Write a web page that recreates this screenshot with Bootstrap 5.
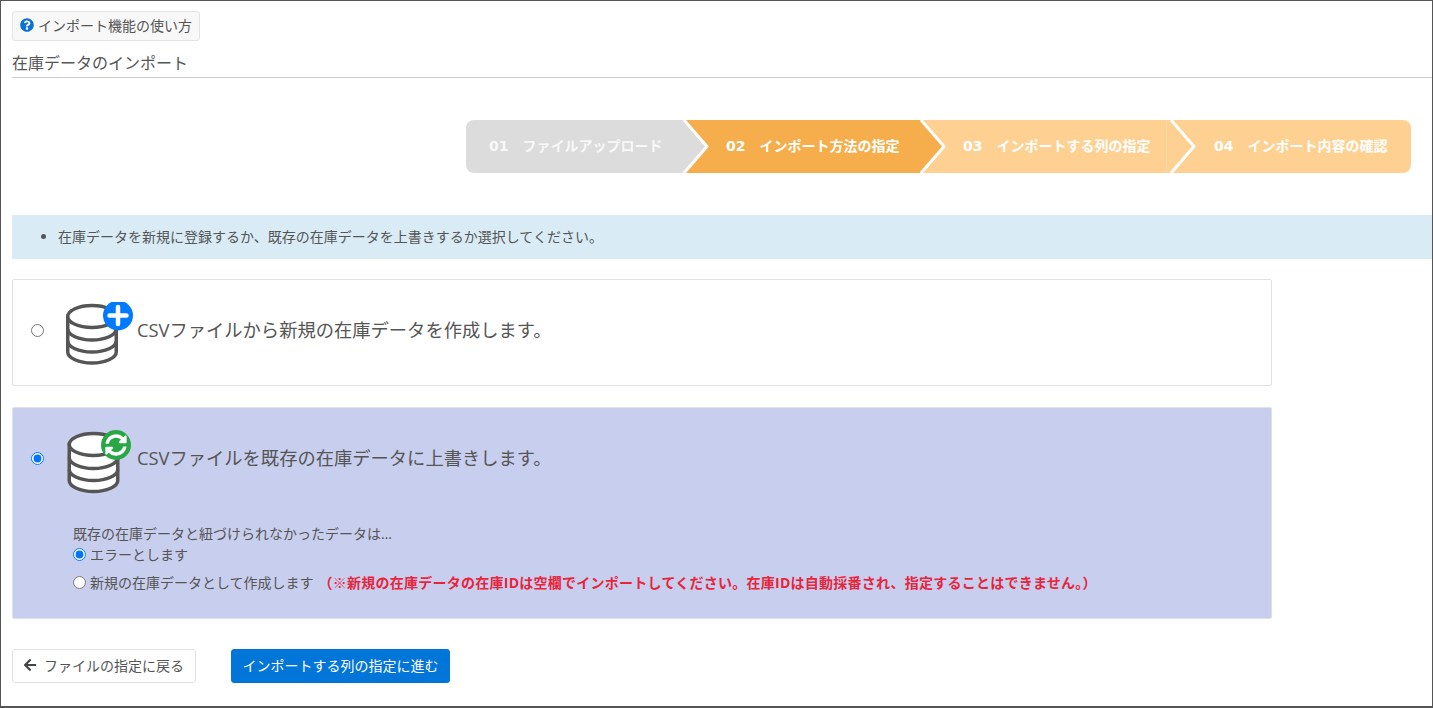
<!DOCTYPE html>
<html lang="ja">
<head>
    <meta charset="UTF-8">
    <meta name="viewport" content="width=device-width, initial-scale=1">
    <title>在庫データのインポート</title>
    <link href="https://cdn.jsdelivr.net/npm/bootstrap@5.3.0/dist/css/bootstrap.min.css" rel="stylesheet">
    <script src="https://cdn.jsdelivr.net/npm/bootstrap@5.3.0/dist/js/bootstrap.bundle.min.js"></script>
    <style>
        html, body { height: 100%; overflow: hidden; }
        body { font-family: "Open Sans", "Noto Sans CJK JP", sans-serif; font-size: 14px; color: #555; background: #fff; }
        .page-frame { height: 708px; border: 1px solid #555; border-bottom-width: 2px; padding: 10px 0 0 11px; }
        .help-btn { display: inline-flex; align-items: center; gap: 4px; height: 30px; padding: 0 7px 2px; font-size: 14px; color: #555; background: #f8f8f9; border: 1px solid #e2e3e7; border-radius: 3px; }
        .page-title { margin: 12px 0 0; height: 25px; font-size: 16px; line-height: 21px; font-weight: 400; border-bottom: 1px solid #ccc; color: #555; }
        .stepper { width: 945px; height: 53px; margin: 42px 0 42px 454px; font-family: "DejaVu Sans", "Noto Sans CJK JP", sans-serif; font-size: 14px; font-weight: 700; color: #fff; }
        .step-item { position: relative; display: flex; align-items: center; height: 53px; }
        .step-item svg { position: absolute; top: 0; left: 100%; z-index: 1; overflow: visible; }
        .step-no { margin-right: 14px; }
        .step-1 { width: 218px; padding-left: 23px; background: #dcdcdc; border-radius: 8px 0 0 8px; color: #f8f8f8; }
        .step-2 { width: 237px; padding-left: 42px; background: #f6ad4b; }
        .step-3 { width: 246px; padding-left: 42px; background: #fed193; border-right: 1px solid #fbd7a6; }
        .step-4 { width: 244px; padding-left: 47px; background: #fed193; border-radius: 0 8px 8px 0; }
        .step-3 svg { left: calc(100% + 5px); }
        .info-bar { height: 44px; background: #d9ecf5; margin: 0 0 20px; padding: 0 0 2px 46px; display: flex; align-items: center; }
        .info-bar ul { margin: 0; padding: 0; }
        .option-box { width: 1260px; border: 1px solid #dee2e6; border-radius: 2px; padding: 22px 0 0 18px; margin-bottom: 21px; }
        .option-new { height: 107px; }
        .option-over { height: 212px; background: #c8ceed; }
        .option-head { display: flex; }
        .option-head input { margin: 22px 0 0; width: 13px; height: 13px; }
        .option-head svg { margin-left: 20px; flex: none; }
        .option-over .option-head svg { margin-left: 21px; }
        .option-label { margin: 13px 0 0 3px; font-size: 18.3px; line-height: 30px; }
        .option-over .option-label { margin-left: 2px; }
        .sub-options { margin: 28px 0 0 42px; line-height: 20px; }
        .sub-row { display: flex; align-items: center; gap: 4px; margin: 0; height: 20px; }
        .sub-row input { margin: 0; width: 13px; height: 13px; }
        .sub-row + .sub-row { margin-top: 8px; }
        .sub-rows { padding-top: 0.5px; }
        .dots { letter-spacing: 1px; }
        .warn-text { color: #e8243c; font-weight: 700; margin-left: 1px; letter-spacing: .25px; }
        .foot-btns { display: flex; gap: 35px; margin-top: 30px; }
        .back-btn { display: inline-flex; align-items: center; gap: 7px; height: 34px; padding: 0 11px 2px 10px; font-size: 14px; color: #555; background: #fff; border: 1px solid #dee2e6; border-radius: 3px; }
        .next-btn { height: 34px; padding: 0 10.5px 2px; font-size: 14px; color: #fff; background: #0275d8; border: 1px solid #0275d8; border-radius: 3px; }
    </style>
</head>
<body>
    <div class="page-frame">
        <button type="button" class="help-btn">
            <svg width="14" height="14" viewBox="0 0 512 512"><path fill="#0b72d1" d="M504 256c0 136.997-111.043 248-248 248S8 392.997 8 256C8 119.083 119.043 8 256 8s248 111.083 248 248zM262.655 90c-54.497 0-89.255 22.957-116.549 63.758-3.536 5.286-2.353 12.415 2.715 16.258l34.699 26.31c5.205 3.947 12.621 3.008 16.665-2.122 17.864-22.658 30.113-35.797 57.303-35.797 20.429 0 45.698 13.148 45.698 32.958 0 14.976-12.363 22.667-32.534 33.976C247.128 238.528 216 254.941 216 296v4c0 6.627 5.373 12 12 12h56c6.627 0 12-5.373 12-12v-1.333c0-28.462 83.186-29.647 83.186-106.667 0-58.002-60.165-102-116.531-102zM256 338c-25.365 0-46 20.635-46 46 0 25.364 20.635 46 46 46s46-20.636 46-46c0-25.365-20.635-46-46-46z"/></svg>
            インポート機能の使い方
        </button>
        <h1 class="page-title">在庫データのインポート</h1>

        <!-- Steps -->
        <div class="stepper d-flex">
            <div class="step-item step-1"><span class="step-no">01</span>ファイルアップロード
                <svg width="24" height="53"><path d="M0 0L23 26.5L0 53" fill="#dcdcdc" stroke="#fff" stroke-width="3" stroke-linejoin="round"/></svg></div>
            <div class="step-item step-2"><span class="step-no">02</span>インポート方法の指定
                <svg width="24" height="53"><path d="M0 0L23 26.5L0 53" fill="#f6ad4b" stroke="#fff" stroke-width="3" stroke-linejoin="round"/></svg></div>
            <div class="step-item step-3"><span class="step-no">03</span>インポートする列の指定
                <svg width="24" height="53"><path d="M0 0L23 26.5L0 53" fill="#fed193" stroke="#fff" stroke-width="3" stroke-linejoin="round"/></svg></div>
            <div class="step-item step-4"><span class="step-no">04</span>インポート内容の確認</div>
        </div>

        <div class="info-bar">
            <ul><li>在庫データを新規に登録するか、既存の在庫データを上書きするか選択してください。</li></ul>
        </div>

        <!-- Option: new -->
        <div class="option-box option-new">
            <label class="option-head">
                <input type="radio" name="importMode">
                <svg width="70" height="66" viewBox="0 0 70 66">
                    <g fill="#fff" stroke="#555" stroke-width="3.5">
                        <path d="M3.75 14.5V50c0 6 11 11 24.25 11s24.25-5 24.25-11V14.5z"/>
                        <ellipse cx="28" cy="14.5" rx="24.25" ry="11"/>
                        <path fill="none" d="M3.75 27c0 6 11 11 24.25 11s24.25-5 24.25-11M3.75 39c0 6 11 11 24.25 11s24.25-5 24.25-11"/>
                    </g>
                    <circle cx="54" cy="13.5" r="15" fill="#007bff"/>
                    <path d="M54 5v17M45.5 13.5h17" stroke="#fff" stroke-width="4.5" stroke-linecap="round"/>
                </svg>
                <span class="option-label">CSVファイルから新規の在庫データを作成します。</span>
            </label>
        </div>

        <!-- Option: overwrite -->
        <div class="option-box option-over">
            <label class="option-head">
                <input type="radio" name="importMode" checked>
                <svg width="70" height="66" viewBox="0 0 70 66">
                    <g fill="#fff" stroke="#555" stroke-width="3.5">
                        <path d="M4.25 14.5V50.5c0 6 11 11 24.25 11s24.25-5 24.25-11V14.5z"/>
                        <ellipse cx="28.5" cy="14.5" rx="24.25" ry="11"/>
                        <path fill="none" d="M4.25 27.5c0 6 11 11 24.25 11s24.25-5 24.25-11M4.25 39.5c0 6 11 11 24.25 11s24.25-5 24.25-11"/>
                    </g>
                    <circle cx="51" cy="15" r="15" fill="#28a745"/>
                    <svg x="40" y="4" width="22" height="22" viewBox="0 0 512 512"><path fill="#fff" d="M370.72 133.28C339.458 104.008 298.888 87.962 255.848 88c-77.458.068-144.328 53.178-162.791 126.85-1.344 5.363-6.122 9.15-11.651 9.15H24.103c-7.498 0-13.194-6.807-11.807-14.176C33.933 94.924 134.813 8 256 8c66.448 0 126.791 26.136 171.315 68.685L463.03 40.97C478.149 25.851 504 36.559 504 57.941V192c0 13.255-10.745 24-24 24H345.941c-21.382 0-32.09-25.851-16.971-40.971l41.75-41.749zM32 296h134.059c21.382 0 32.09 25.851 16.971 40.971l-41.75 41.75c31.262 29.273 71.835 45.319 114.876 45.28 77.418-.07 144.315-53.144 162.787-126.849 1.344-5.363 6.122-9.15 11.651-9.15h57.304c7.498 0 13.194 6.807 11.807 14.176C478.067 417.076 377.187 504 256 504c-66.448 0-126.791-26.136-171.315-68.685L48.97 471.03C33.851 486.149 8 475.441 8 454.059V320c0-13.255 10.745-24 24-24z"/></svg>
                </svg>
                <span class="option-label">CSVファイルを既存の在庫データに上書きします。</span>
            </label>
            <div class="sub-options">
                <div>既存の在庫データと紐づけられなかったデータは<span class="dots">…</span></div>
                <div class="sub-rows">
                    <label class="sub-row"><input type="radio" name="unmatched" checked>エラーとします</label>
                    <label class="sub-row"><input type="radio" name="unmatched">新規の在庫データとして作成します<span class="warn-text">（※新規の在庫データの在庫IDは空欄でインポートしてください。在庫IDは自動採番され、指定することはできません。）</span></label>
                </div>
            </div>
        </div>

        <div class="foot-btns">
            <button type="button" class="back-btn">
                <svg width="14" height="14" viewBox="0 0 448 512"><path fill="#444" d="M257.5 445.1l-22.2 22.2c-9.4 9.4-24.6 9.4-33.9 0L7 273c-9.4-9.4-9.4-24.6 0-33.9L201.4 44.7c9.4-9.4 24.6-9.4 33.9 0l22.2 22.2c9.5 9.5 9.3 25-.4 34.3L136.6 216H424c13.3 0 24 10.7 24 24v32c0 13.3-10.7 24-24 24H136.6l120.5 114.8c9.8 9.3 10 24.8.4 34.3z"/></svg>
                ファイルの指定に戻る
            </button>
            <button type="button" class="next-btn">インポートする列の指定に進む</button>
        </div>
    </div>
</body>
</html>
